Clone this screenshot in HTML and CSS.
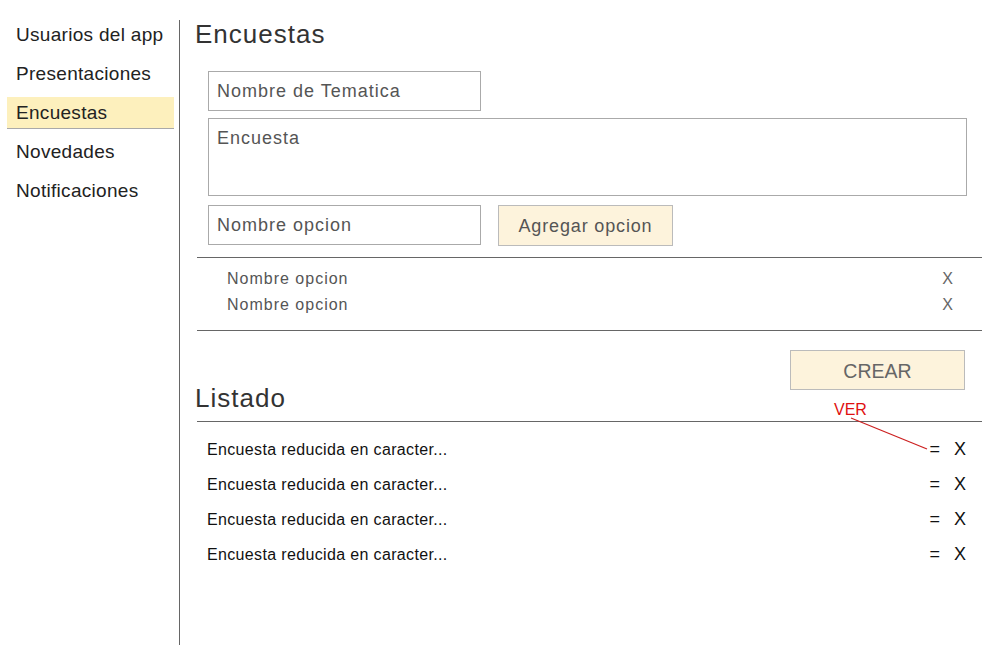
FILE: index.html
```html
<!DOCTYPE html>
<html lang="es">
<head>
<meta charset="utf-8">
<title>Encuestas</title>
<link rel="stylesheet" href="styles.css">
</head>
<body>
<div class="app">
  <nav class="sidebar">
    <div class="nav-item">Usuarios del app</div>
    <div class="nav-item">Presentaciones</div>
    <div class="nav-item active">Encuestas</div>
    <div class="nav-item">Novedades</div>
    <div class="nav-item">Notificaciones</div>
  </nav>
  <main class="main">
    <h1 class="title">Encuestas</h1>
    <div class="form">
      <div class="field short">Nombre de Tematica</div>
      <div class="field area">Encuesta</div>
      <div class="form-row">
        <div class="field short">Nombre opcion</div>
        <div class="btn add">Agregar opcion</div>
      </div>
    </div>
    <div class="options">
      <div class="option"><span>Nombre opcion</span><span class="opt-x">X</span></div>
      <div class="option"><span>Nombre opcion</span><span class="opt-x">X</span></div>
    </div>
    <div class="list-head">
      <h2 class="subtitle">Listado</h2>
      <div class="create-col">
        <div class="btn create">CREAR</div>
        <div class="note">VER</div>
      </div>
    </div>
    <div class="list">
      <div class="list-row"><span>Encuesta reducida en caracter...</span><span class="actions"><span>=</span><span>X</span></span></div>
      <div class="list-row"><span>Encuesta reducida en caracter...</span><span class="actions"><span>=</span><span>X</span></span></div>
      <div class="list-row"><span>Encuesta reducida en caracter...</span><span class="actions"><span>=</span><span>X</span></span></div>
      <div class="list-row"><span>Encuesta reducida en caracter...</span><span class="actions"><span>=</span><span>X</span></span></div>
    </div>
  </main>
  <svg class="note-line" width="1000" height="665" viewBox="0 0 1000 665">
    <line x1="851" y1="418" x2="927" y2="449" stroke="#cc1f1f" stroke-width="1.2"/>
  </svg>
</div>
</body>
</html>
```

FILE: styles.css
```css
* { box-sizing: border-box; }
html, body { margin: 0; padding: 0; background: #fff; }
body {
  font-family: "Liberation Sans", Arial, sans-serif;
  color: #222;
}
.app {
  position: relative;
  display: flex;
  align-items: flex-start;
  width: 1000px;
  height: 665px;
}
.sidebar {
  width: 167px;
  margin-left: 7px;
  padding-top: 19px;
  display: flex;
  flex-direction: column;
  gap: 7px;
}
.nav-item {
  height: 32px;
  line-height: 32px;
  padding-left: 9px;
  font-size: 19px;
  letter-spacing: 0.3px;
  color: #222;
  border-bottom: 1px solid transparent;
}
.nav-item.active {
  background: #fdf0bd;
  border-bottom-color: #a9a9a9;
}
.main {
  margin-left: 5px;
  margin-top: 20px;
  height: 625px;
  width: 821px;
  border-left: 1px solid #666;
}
.title {
  margin: 0;
  padding-left: 15px;
  font-size: 26px;
  letter-spacing: 1px;
  line-height: 29px;
  font-weight: normal;
  color: #333;
}
.form {
  padding-left: 28px;
  margin-top: 22px;
}
.field {
  border: 1px solid #aaa;
  font-size: 18px;
  letter-spacing: 1px;
  color: #555;
  padding-left: 8px;
  background: #fff;
}
.field.short {
  width: 273px;
  height: 40px;
  line-height: 38px;
}
.field.area {
  margin-top: 7px;
  width: 759px;
  height: 78px;
  line-height: 22px;
  padding-top: 8px;
}
.form-row {
  display: flex;
  gap: 17px;
  margin-top: 9px;
}
.btn {
  background: #fdf3dc;
  border: 1px solid #bbb;
  color: #555;
  text-align: center;
}
.btn.add {
  width: 175px;
  height: 41px;
  line-height: 41px;
  font-size: 18px;
  letter-spacing: 0.85px;
}
.options {
  margin-top: 11px;
  margin-left: 17px;
  width: 785px;
  border-top: 1px solid #666;
  border-bottom: 1px solid #666;
  padding: 8px 29px 12px 30px;
}
.option {
  display: flex;
  justify-content: space-between;
  height: 26px;
  line-height: 26px;
  font-size: 16px;
  letter-spacing: 1px;
  color: #555;
}
.opt-x { color: #666; letter-spacing: 0; }
.list-head {
  margin-left: 17px;
  width: 785px;
  display: flex;
  justify-content: space-between;
  align-items: flex-end;
  border-bottom: 1px solid #666;
  padding-right: 17px;
}
.subtitle {
  margin: 0 0 0 -2px;
  font-size: 26px;
  letter-spacing: 1px;
  line-height: 30px;
  font-weight: normal;
  color: #333;
  padding-bottom: 8px;
}
.create-col {
  display: flex;
  flex-direction: column;
  padding-top: 19px;
}
.btn.create {
  width: 175px;
  height: 40px;
  line-height: 40px;
  font-size: 19.5px;
  color: #666;
}
.note {
  margin-top: 12px;
  margin-left: 44px;
  font-size: 16px;
  line-height: 16px;
  color: #e01010;
  padding-bottom: 3px;
}
.list {
  margin-left: 17px;
  width: 785px;
  padding: 10px 16px 0 10px;
}
.list-row {
  display: flex;
  justify-content: space-between;
  align-items: center;
  height: 35px;
  font-size: 16px;
  letter-spacing: 0.35px;
  color: #111;
}
.actions {
  display: flex;
  gap: 14px;
  font-size: 18px;
  letter-spacing: 0;
}
.note-line {
  position: absolute;
  left: 0;
  top: 0;
  pointer-events: none;
}
```
